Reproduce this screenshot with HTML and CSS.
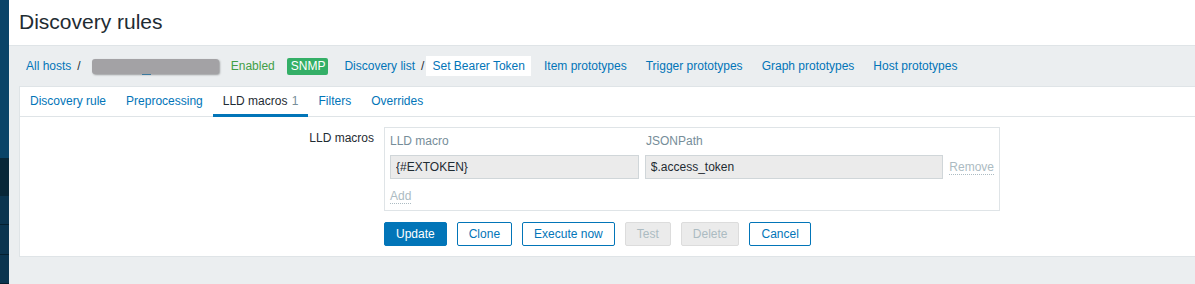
FILE: index.html
```html
<!DOCTYPE html>
<html lang="en">
<head>
    <meta charset="UTF-8">
    <title>Discovery rules</title>
    <link rel="stylesheet" href="styles.css">
</head>
<body>
    <aside class="sidebar">
        <div class="side-top"></div>
        <div class="side-dark"></div>
        <div class="side-item"></div>
        <div class="side-item"></div>
        <div class="side-item"></div>
    </aside>
    <div class="layout">
        <header class="page-header">
            <h1>Discovery rules</h1>
        </header>
        <main class="content">
            <nav class="breadcrumbs">
                <a href="#">All hosts</a>
                <span class="sep">/</span>
                <span class="hidden-host"><span class="blur"></span></span>
                <span class="status">Enabled</span>
                <span class="badge">SNMP</span>
                <a href="#">Discovery list</a>
                <span class="sep">/</span>
                <a href="#" class="current">Set Bearer Token</a>
                <a href="#" class="gap">Item prototypes</a>
                <a href="#" class="gap">Trigger prototypes</a>
                <a href="#" class="gap">Graph prototypes</a>
                <a href="#" class="gap">Host prototypes</a>
            </nav>
            <section class="card">
                <ul class="tabs">
                    <li><a href="#">Discovery rule</a></li>
                    <li><a href="#">Preprocessing</a></li>
                    <li class="active"><a href="#">LLD macros <span class="count">1</span></a></li>
                    <li><a href="#">Filters</a></li>
                    <li><a href="#">Overrides</a></li>
                </ul>
                <div class="form">
                    <label class="form-label">LLD macros</label>
                    <div class="form-field">
                        <div class="macro-table">
                            <div class="macro-row head">
                                <span class="col-macro">LLD macro</span>
                                <span class="col-path">JSONPath</span>
                            </div>
                            <div class="macro-row">
                                <input class="col-macro input" value="{#EXTOKEN}" readonly>
                                <input class="col-path input" value="$.access_token" readonly>
                                <span class="link-off">Remove</span>
                            </div>
                            <div class="macro-row add-row">
                                <span class="link-off">Add</span>
                            </div>
                        </div>
                        <div class="buttons">
                            <button class="btn primary">Update</button>
                            <button class="btn">Clone</button>
                            <button class="btn">Execute now</button>
                            <button class="btn" disabled>Test</button>
                            <button class="btn" disabled>Delete</button>
                            <button class="btn">Cancel</button>
                        </div>
                    </div>
                </div>
            </section>
        </main>
    </div>
</body>
</html>
```

FILE: styles.css
```css
:root {
    --link: #0275b8;
    --text: #1f2c33;
    --muted: #768d99;
    --page-bg: #ebeef0;
    --line: #dfe4e7;
}

* {
    box-sizing: border-box;
}

body {
    margin: 0;
    display: flex;
    height: 100vh;
    font-family: "Liberation Sans", Arial, sans-serif;
    font-size: 12px;
    color: var(--text);
    background: var(--page-bg);
    overflow: hidden;
}

a {
    color: var(--link);
    text-decoration: none;
}

/* sidebar strip */
.sidebar {
    width: 9px;
    flex-shrink: 0;
    display: flex;
    flex-direction: column;
    background: #0b3550;
}

.side-top {
    height: 166px;
    background: #0a4468;
}

.side-dark {
    height: 40px;
    background: #082738;
}

.side-item {
    height: 31px;
    border-bottom: 1px solid #05202f;
}

.layout {
    flex: 1;
    min-width: 0;
    display: flex;
    flex-direction: column;
}

.page-header {
    height: 46px;
    flex-shrink: 0;
    background: #fff;
    border-bottom: 1px solid var(--line);
    padding: 0 10px;
    display: flex;
    align-items: center;
}

.page-header h1 {
    margin: 0 0 2px;
    font-size: 21px;
    font-weight: normal;
    color: var(--text);
}

.content {
    padding: 0 0 0 10px;
}

/* breadcrumbs */
.breadcrumbs {
    height: 40px;
    display: flex;
    align-items: center;
    padding-left: 7px;
    white-space: nowrap;
}

.sep {
    margin: 0 6px;
    color: var(--text);
}

.hidden-host {
    position: relative;
    width: 130px;
    height: 16px;
    margin-left: 4px;
}

.hidden-host::after {
    content: '';
    position: absolute;
    left: 51px;
    bottom: -1px;
    width: 9px;
    height: 1px;
    background: #3c7a9e;
}

.blur {
    position: absolute;
    inset: 1px 2px 0 1px;
    background: #a3a2a5;
    border-radius: 3px;
    box-shadow: 1px 1px 2px rgba(0,0,0,0.35);
}

.status {
    color: #429e47;
    margin-left: 10px;
}

.badge {
    margin: 0 16px 0 12px;
    background: #34af67;
    color: #fff;
    padding: 1px 3px 2px 4px;
    line-height: 14px;
    border-radius: 2px;
}

.current {
    background: #fff;
    margin-left: -4px;
    padding: 0 6px;
    line-height: 20px;
}

.gap {
    margin-left: 13px;
}

.gap + .gap {
    margin-left: 19px;
}

/* card */
.card {
    background: #fff;
    border: 1px solid var(--line);
    border-right: none;
    margin-right: -20px;
}

.tabs {
    list-style: none;
    margin: 0;
    padding: 0;
    display: flex;
    height: 30px;
    border-bottom: 1px solid var(--line);
}

.tabs li {
    padding: 0 10px;
    display: flex;
    align-items: center;
    border-bottom: 3px solid transparent;
    margin-bottom: -1px;
}

.tabs li.active {
    border-bottom-color: var(--link);
}

.tabs li.active a {
    color: var(--text);
}

.count {
    color: var(--muted);
    margin-left: 1px;
}

.form {
    display: grid;
    grid-template-columns: 354px 1fr;
    column-gap: 10px;
    padding: 10px 0 10px;
}

.form-label {
    text-align: right;
    padding-top: 4px;
}

/* macro table */
.macro-table {
    width: 616px;
    border: 1px solid var(--line);
    padding: 3px 5px 6px;
}

.macro-row {
    display: flex;
    align-items: center;
    gap: 6px;
}

.macro-row.head {
    height: 20px;
    color: var(--muted);
    margin-bottom: 4px;
}

.col-macro {
    width: 250px;
}

.col-path {
    width: 300px;
}

.input {
    height: 24px;
    border: 1px solid #d0d6d9;
    background: #ebebeb;
    font: inherit;
    color: var(--text);
    padding: 0 5px;
    outline: none;
}

.link-off {
    color: #acbbc2;
    border-bottom: 1px dotted #acbbc2;
    line-height: 14px;
}

.add-row {
    margin-top: 10px;
}

/* buttons */
.buttons {
    display: flex;
    gap: 10px;
    margin-top: 11px;
}

.btn {
    height: 24px;
    padding: 0 11px;
    font: inherit;
    color: var(--link);
    background: #fff;
    border: 1px solid var(--link);
    border-radius: 2px;
}

.btn.primary {
    background: var(--link);
    color: #fff;
}

.btn:disabled {
    background: #ebebeb;
    border-color: #dcdcdc;
    color: #acbbc2;
}
```
